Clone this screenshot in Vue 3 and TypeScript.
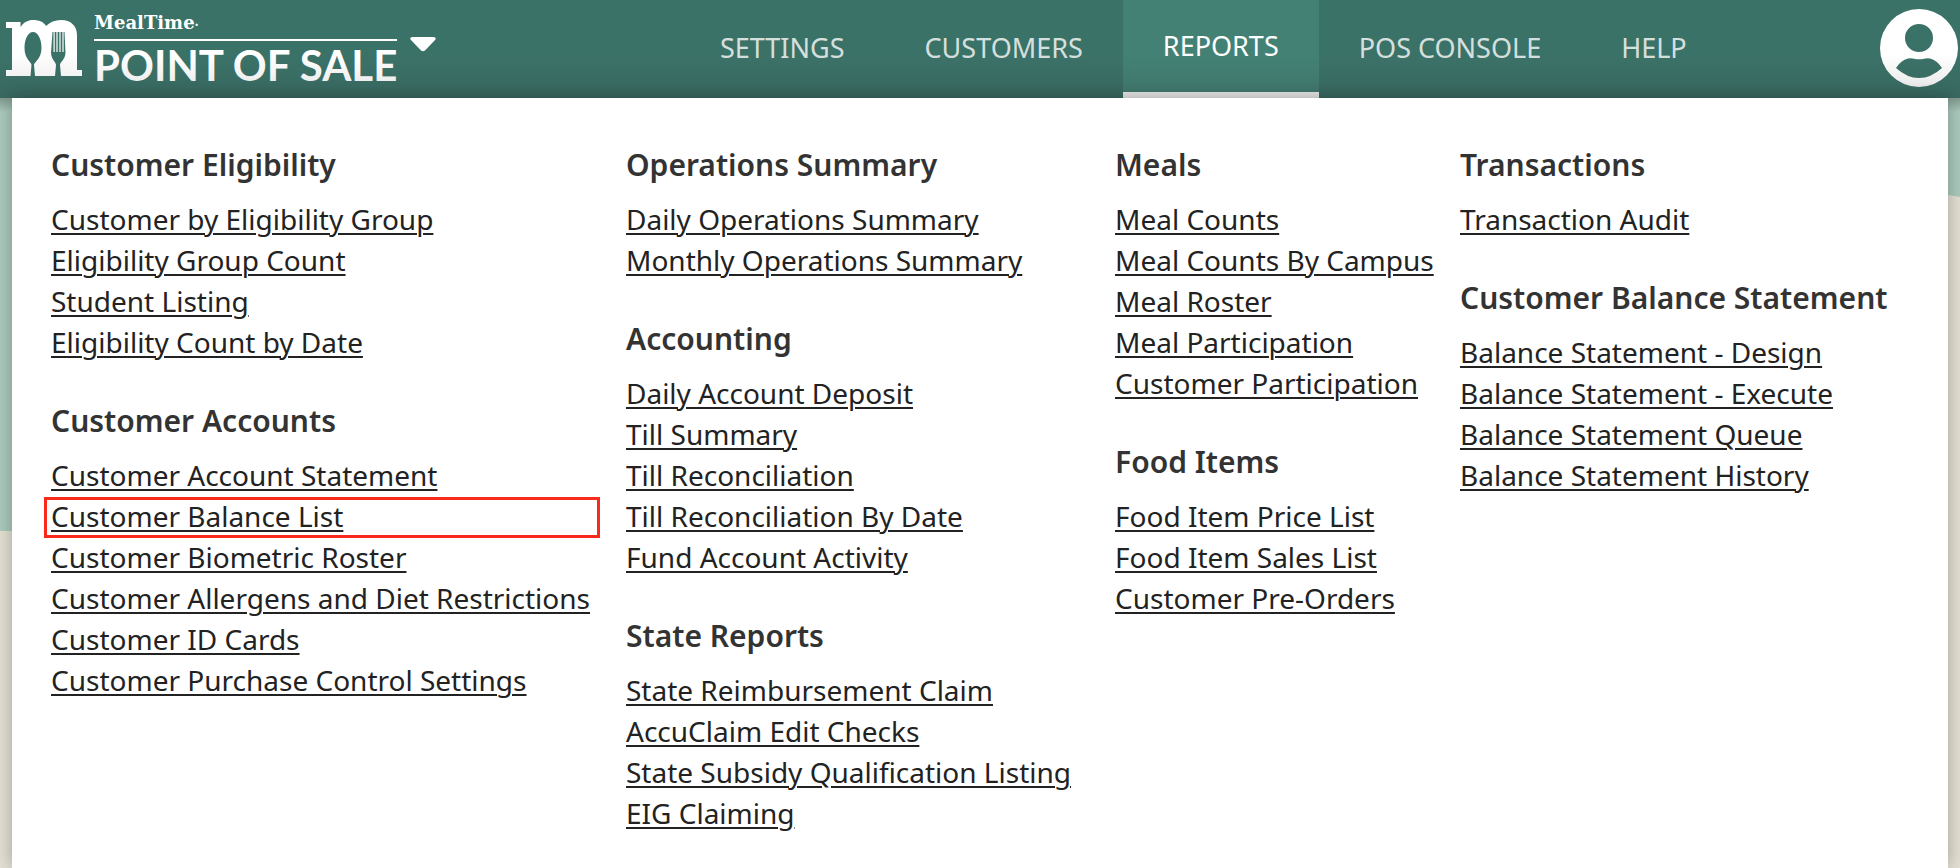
<script setup lang="ts">
interface NavItem {
  label: string
  active?: boolean
}

interface ReportLink {
  label: string
  highlighted?: boolean
}

interface ReportGroup {
  title: string
  links: ReportLink[]
}

const navItems: NavItem[] = [
  { label: 'SETTINGS' },
  { label: 'CUSTOMERS' },
  { label: 'REPORTS', active: true },
  { label: 'POS CONSOLE' },
  { label: 'HELP' },
]

const columns: ReportGroup[][] = [
  [
    {
      title: 'Customer Eligibility',
      links: [
        { label: 'Customer by Eligibility Group' },
        { label: 'Eligibility Group Count' },
        { label: 'Student Listing' },
        { label: 'Eligibility Count by Date' },
      ],
    },
    {
      title: 'Customer Accounts',
      links: [
        { label: 'Customer Account Statement' },
        { label: 'Customer Balance List', highlighted: true },
        { label: 'Customer Biometric Roster' },
        { label: 'Customer Allergens and Diet Restrictions' },
        { label: 'Customer ID Cards' },
        { label: 'Customer Purchase Control Settings' },
      ],
    },
  ],
  [
    {
      title: 'Operations Summary',
      links: [{ label: 'Daily Operations Summary' }, { label: 'Monthly Operations Summary' }],
    },
    {
      title: 'Accounting',
      links: [
        { label: 'Daily Account Deposit' },
        { label: 'Till Summary' },
        { label: 'Till Reconciliation' },
        { label: 'Till Reconciliation By Date' },
        { label: 'Fund Account Activity' },
      ],
    },
    {
      title: 'State Reports',
      links: [
        { label: 'State Reimbursement Claim' },
        { label: 'AccuClaim Edit Checks' },
        { label: 'State Subsidy Qualification Listing' },
        { label: 'EIG Claiming' },
      ],
    },
  ],
  [
    {
      title: 'Meals',
      links: [
        { label: 'Meal Counts' },
        { label: 'Meal Counts By Campus' },
        { label: 'Meal Roster' },
        { label: 'Meal Participation' },
        { label: 'Customer Participation' },
      ],
    },
    {
      title: 'Food Items',
      links: [
        { label: 'Food Item Price List' },
        { label: 'Food Item Sales List' },
        { label: 'Customer Pre-Orders' },
      ],
    },
  ],
  [
    {
      title: 'Transactions',
      links: [{ label: 'Transaction Audit' }],
    },
    {
      title: 'Customer Balance Statement',
      links: [
        { label: 'Balance Statement - Design' },
        { label: 'Balance Statement - Execute' },
        { label: 'Balance Statement Queue' },
        { label: 'Balance Statement History' },
      ],
    },
  ],
]
</script>

<template>
  <div class="page">
    <header class="topbar">
      <button class="brand" type="button" aria-haspopup="menu">
        <svg class="brand-mark" viewBox="0 0 76 56" aria-hidden="true">
          <path
            fill="#fff"
            fill-rule="evenodd"
            d="M0 2H14.500V7C18 2 22 0 27 0C33 0 38 2 40 6C44 2 49 0 55 0C65 0 71 6 71 15V50H76V56H55L54 45C54 42 59 40 59.500 33L58.500 12H57.600V32H56.400V12H54.600V32H53.400V12H51.600V32H50.400V12H48.700V32H47.500V12H46.500L45 33C45.500 40 50 42 50 45L49 56H29L28 45C28 42 35.500 39 35.500 28C35.500 19 32 12 27 12C22 12 18.500 19 18.500 28C18.500 39 25.500 42 25.500 45L24.500 56H0V50H6V8H0Z"
          />
        </svg>
        <span class="brand-text">
          <span class="brand-name">MealTime<span class="brand-dot">·</span></span>
          <span class="brand-product">POINT OF SALE</span>
        </span>
        <svg class="brand-caret" viewBox="0 0 26 15" aria-hidden="true">
          <path fill="#fff" d="M2 0H24Q27 1 25 3L15 13.500Q13 15 11 13.500L1 3Q-1 1 2 0Z" />
        </svg>
      </button>

      <nav class="nav" aria-label="Main">
        <a
          v-for="item in navItems"
          :key="item.label"
          href="#"
          class="nav-item"
          :class="{ active: item.active }"
          :aria-current="item.active ? 'page' : undefined"
          >{{ item.label }}</a
        >
      </nav>

      <button class="account" type="button" aria-label="Account">
        <svg viewBox="0 0 78 78" aria-hidden="true">
          <path
            fill="#fff"
            fill-rule="evenodd"
            d="M39 0A39 39 0 1 1 39 78A39 39 0 1 1 39 0ZM39 15A14 14 0 1 0 39 43A14 14 0 1 0 39 15ZM16 59Q21 51 28 49.500Q31 49 34 49.700Q39 51 44 49.700Q47 49 50 49.500Q57 51 62 59Q51 69 39 69Q27 69 16 59Z"
          />
        </svg>
      </button>
    </header>

    <main class="stage">
      <svg class="scene" viewBox="0 0 1960 770" preserveAspectRatio="none" aria-hidden="true">
        <rect width="1960" height="770" fill="#e5e1d4" />
        <path fill="#acccbe" d="M0 0H1960V99L1948 97C1500 20 900 433 12 433H0Z" />
      </svg>
      <section class="panel" aria-label="Reports">
        <div v-for="(groups, index) in columns" :key="index" class="column">
          <section v-for="group in groups" :key="group.title" class="group">
            <h2>{{ group.title }}</h2>
            <ul>
              <li v-for="link in group.links" :key="link.label" :class="{ highlighted: link.highlighted }">
                <a href="#">{{ link.label }}</a>
              </li>
            </ul>
          </section>
        </div>
      </section>
    </main>
  </div>
</template>

<style>
body {
  margin: 0;
}
</style>

<style scoped>
.page {
  display: flex;
  flex-direction: column;
  min-height: 100vh;
  overflow: hidden;
  font-family: 'Noto Sans', 'Open Sans', sans-serif;
}

.topbar {
  position: relative;
  z-index: 1;
  display: grid;
  grid-template-columns: 682fr 1044fr 234fr;
  height: 98px;
  background: #3b7268;
}

.topbar::after {
  content: '';
  position: absolute;
  inset: auto 0 0;
  height: 44px;
  background: linear-gradient(transparent, rgba(40, 40, 40, 0.12));
  pointer-events: none;
}

button {
  padding: 0;
  border: 0;
  background: none;
  font: inherit;
  color: #fff;
}

.brand {
  display: flex;
  align-items: flex-start;
  justify-self: start;
  padding-left: 6px;
  text-align: left;
}

.brand-mark {
  width: 76px;
  height: 56px;
  margin-top: 20px;
}

.brand-text {
  display: flex;
  flex-direction: column;
  margin-left: 12px;
}

.brand-name {
  height: 39px;
  border-bottom: 2px solid #fff;
  font: bold 18px/46px 'DejaVu Serif', serif;
}

.brand-dot {
  font-size: 12px;
}

.brand-product {
  font: bold 42px/48px Lato, sans-serif;
  white-space: nowrap;
}

.brand-caret {
  width: 26px;
  height: 15px;
  margin: 37px 0 0 13px;
}

.nav {
  display: flex;
}

.nav-item {
  box-sizing: border-box;
  height: 98px;
  padding: 0 40px;
  font-size: 27px;
  line-height: 95px;
  color: rgba(255, 255, 255, 0.8);
  text-decoration: none;
  white-space: nowrap;
}

.nav-item.active {
  border-bottom: 6px solid #fff;
  background: #438175;
  color: #fff;
  line-height: 91px;
}

.account {
  align-self: start;
  justify-self: end;
  width: 78px;
  height: 78px;
  margin: 9px 2px 0 0;
}

.account svg {
  display: block;
}

.stage {
  position: relative;
  display: flex;
  flex: 1;
  padding: 0 12px;
}

.stage::before {
  content: '';
  position: absolute;
  z-index: 1;
  inset: 0 0 auto;
  height: 14px;
  background: linear-gradient(rgba(0, 0, 0, 0.25), transparent);
}

.scene {
  position: absolute;
  inset: 0;
  width: 100%;
  height: 100%;
}

.panel {
  position: relative;
  z-index: 2;
  display: grid;
  flex: 1;
  grid-template-columns: 575fr 489fr 345fr 449fr;
  padding: 47px 39px 12px;
  background: #fff;
  box-shadow: 0 0 18px rgba(0, 0, 0, 0.3);
}

.column {
  display: flex;
  flex-direction: column;
  gap: 38px;
  min-width: 0;
}

h2 {
  margin: 0 0 14px;
  font-size: 30px;
  font-weight: 600;
  line-height: 40px;
  color: #333;
  white-space: nowrap;
}

ul {
  width: max-content;
  margin: 0;
  padding: 0;
  list-style: none;
}

li {
  position: relative;
  font-size: 28px;
  line-height: 41px;
}

li a {
  color: #222;
  text-decoration-thickness: 2px;
  text-underline-offset: 3px;
}

.highlighted::after {
  content: '';
  position: absolute;
  inset: 1px -10px -1px -7px;
  border: 3px solid #f92a1c;
  pointer-events: none;
}
</style>
